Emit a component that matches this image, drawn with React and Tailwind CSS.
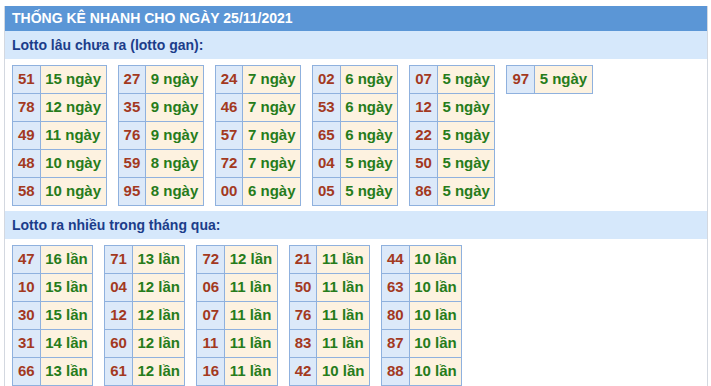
import React from "react";

const gan = [
  [["51", 15], ["78", 12], ["49", 11], ["48", 10], ["58", 10]],
  [["27", 9], ["35", 9], ["76", 9], ["59", 8], ["95", 8]],
  [["24", 7], ["46", 7], ["57", 7], ["72", 7], ["00", 6]],
  [["02", 6], ["53", 6], ["65", 6], ["04", 5], ["05", 5]],
  [["07", 5], ["12", 5], ["22", 5], ["50", 5], ["86", 5]],
  [["97", 5]],
];

const nhieu = [
  [["47", 16], ["10", 15], ["30", 15], ["31", 14], ["66", 13]],
  [["71", 13], ["04", 12], ["12", 12], ["60", 12], ["61", 12]],
  [["72", 12], ["06", 11], ["07", 11], ["11", 11], ["16", 11]],
  [["21", 11], ["50", 11], ["76", 11], ["83", 11], ["42", 10]],
  [["44", 10], ["63", 10], ["80", 10], ["87", 10], ["88", 10]],
];

function Table({ rows, unit }) {
  return (
    <div className="grid grid-cols-[auto_auto] border-t border-l border-[#8fb1de] text-[15px]">
      {rows.map(([n, v], i) => (
        <React.Fragment key={i}>
          <div className="h-[28px] px-[5px] flex items-center bg-[#dce9f9] text-[#a3391f] border-r border-b border-[#8fb1de]">
            {n}
          </div>
          <div className="h-[28px] px-[4.5px] flex items-center bg-[#fdf2e0] text-[#267c1b] border-r border-b border-[#8fb1de]">
            {v} {unit}
          </div>
        </React.Fragment>
      ))}
    </div>
  );
}

function Section({ title, data, unit }) {
  return (
    <>
      <div className="h-[28px] flex items-center pl-[7px] bg-[#d6e8fb] text-[#1c3d8a] font-bold text-[14px]">
        {title}
      </div>
      <div className="flex items-start gap-[11px] px-[7px] pt-[6px] pb-[5px]">
        {data.map((rows, i) => (
          <Table key={i} rows={rows} unit={unit} />
        ))}
      </div>
    </>
  );
}

export default function App() {
  return (
    <div
      className="w-[711px] h-[386px] bg-white overflow-hidden pt-[6px] pl-[4px]"
      style={{ fontFamily: '"Liberation Sans", Arial, sans-serif' }}
    >
      <div className="w-[704px] h-[400px] border-x border-[#d3d8e0] bg-white">
        <div className="h-[25px] flex items-center pl-[7px] bg-[#5b96d6] text-white font-bold text-[14px]">
          THỐNG KÊ NHANH CHO NGÀY 25/11/2021
        </div>
        <div className="font-bold">
          <Section title="Lotto lâu chưa ra (lotto gan):" data={gan} unit="ngày" />
          <Section title="Lotto ra nhiều trong tháng qua:" data={nhieu} unit="lần" />
        </div>
      </div>
    </div>
  );
}
